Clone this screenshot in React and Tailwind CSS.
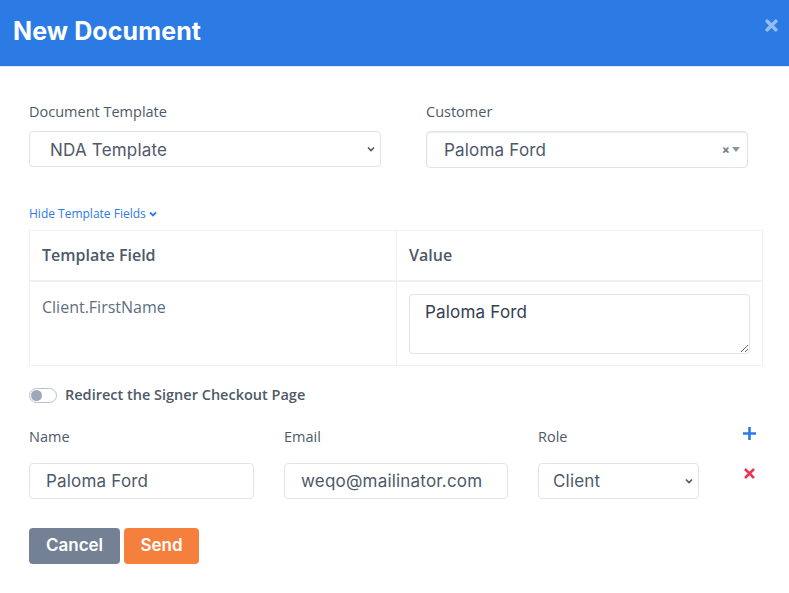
import { useState } from "react";

export default function App() {
  const [redirect, setRedirect] = useState(false);
  const [value, setValue] = useState("Paloma Ford");

  const label = "text-[14.5px] text-[#4d5969] font-medium leading-[20px]";
  const input =
    "h-9 border border-[#dfe3eb] rounded-[4px] bg-white px-4 text-[17px] tracking-[0.2px] text-[#4d5969] outline-none";

  return (
    <div className="w-[789px] h-[593px] bg-white font-['Open_Sans',sans-serif]">
      {/* Header */}
      <div className="h-[67px] bg-[#2c7be5] border-b border-[#e3e8ee] flex items-center justify-between pl-[13px] pr-[11px]">
        <h1 className="text-white text-[25px] font-bold tracking-[0.1px] font-['Inter',sans-serif] -mt-[2px]">
          New Document
        </h1>
        <svg width="13" height="13" viewBox="0 0 12 12" className="-mt-[16px]">
          <path d="M2 2 L10 10 M10 2 L2 10" stroke="#95bdf2" strokeWidth="3.2" strokeLinecap="round" />
        </svg>
      </div>

      <div className="px-[29px] pt-[35px]">
        {/* Template + Customer */}
        <div className="flex">
          <div className="w-[352px]">
            <div className={label}>Document Template</div>
            <div className={`${input} mt-[9px] flex items-center justify-between pl-[20px] pr-[4px] pt-[3px] font-['Inter',sans-serif]`}>
              <span>NDA Template</span>
              <svg width="10" height="10" viewBox="0 0 10 10" className="-mt-[3px]">
                <path d="M2 3.5 L5 6.5 L8 3.5" fill="none" stroke="#4d5969" strokeWidth="1.6" />
              </svg>
            </div>
          </div>
          <div className="ml-[45px] w-[322px]">
            <div className={label}>Customer</div>
            <div className={`${input} h-[37px] mt-[9px] flex items-center justify-between pl-[17px] pr-[7px] pt-[3px] shadow-[inset_0_1px_2px_rgba(0,0,0,0.08)] font-['Inter',sans-serif]`}>
              <span>Paloma Ford</span>
              <span className="flex items-center gap-[2px] text-[#6e7a8a] -mt-[3px]">
                <span className="text-[12px] font-bold leading-none">×</span>
                <svg width="8" height="6" viewBox="0 0 8 6">
                  <path d="M0 0 L8 0 L4 5 Z" fill="#8a94a3" />
                </svg>
              </span>
            </div>
          </div>
        </div>

        {/* Hide template fields */}
        <button className="mt-[40px] flex items-center gap-[2px] text-[12px] text-[#2c7be5] leading-none">
          Hide Template Fields
          <svg width="10" height="10" viewBox="0 0 10 10">
            <path d="M2 3.5 L5 6.5 L8 3.5" fill="none" stroke="#2c7be5" strokeWidth="1.8" />
          </svg>
        </button>

        {/* Table */}
        <table className="mt-[10px] w-[734px] border-collapse border border-[#edf0f4]">
          <thead>
            <tr className="h-[50px] border-b-2 border-[#edf0f4]">
              <th className="w-[367px] border-r border-[#edf0f4] text-left px-[12px] text-[16px] font-semibold text-[#4d5969]">
                Template Field
              </th>
              <th className="text-left px-[12px] text-[16px] font-semibold text-[#4d5969]">Value</th>
            </tr>
          </thead>
          <tbody>
            <tr className="h-[85px]">
              <td className="border-r border-[#edf0f4] align-top px-[12px] pt-[13px] text-[16px] text-[#5e6e82]">
                Client.FirstName
              </td>
              <td className="align-top px-[12px] pt-[12px]">
                <textarea
                  value={value}
                  onChange={(e) => setValue(e.target.value)}
                  className="block w-[341px] h-[60px] border border-[#dfe3eb] rounded-[4px] px-[15px] pt-[5px] text-[17px] tracking-[0.2px] text-[#344050] outline-none font-['Inter',sans-serif]"
                />
              </td>
            </tr>
          </tbody>
        </table>

        {/* Toggle */}
        <div className="mt-[19px] flex items-center gap-[8px]">
          <button
            onClick={() => setRedirect(!redirect)}
            className="w-[28px] h-[15px] rounded-full border border-[#b6c1d2] bg-white flex items-center px-[1px]"
          >
            <span className="w-[11px] h-[11px] rounded-full bg-[#9da9bb]" />
          </button>
          <span className="text-[14.5px] text-[#4d5969] font-semibold leading-[20px]">
            Redirect the Signer Checkout Page
          </span>
        </div>

        {/* Signers */}
        <div className="mt-[22px] flex">
          <div className="w-[225px]">
            <div className={label}>Name</div>
            <input defaultValue="Paloma Ford" className={`${input} mt-[16px] w-[225px] font-['Inter',sans-serif]`} />
          </div>
          <div className="ml-[30px] w-[224px]">
            <div className={label}>Email</div>
            <input defaultValue="weqo@mailinator.com" className={`${input} mt-[16px] w-[224px] font-['Inter',sans-serif]`} />
          </div>
          <div className="ml-[30px] w-[161px]">
            <div className={label}>Role</div>
            <div className={`${input} mt-[16px] flex items-center justify-between pl-[14px] pr-[4px] pt-[2px] font-['Inter',sans-serif]`}>
              <span>Client</span>
              <svg width="10" height="10" viewBox="0 0 10 10" className="-mt-[2px]">
                <path d="M2 3.5 L5 6.5 L8 3.5" fill="none" stroke="#4d5969" strokeWidth="1.6" />
              </svg>
            </div>
          </div>
          <div className="ml-[43px] flex flex-col items-center">
            <svg width="15" height="15" viewBox="0 0 15 15" className="-mt-[1px]">
              <path d="M7.5 1 V14 M1 7.5 H14" stroke="#2c7be5" strokeWidth="2.6" />
            </svg>
            <svg width="13" height="13" viewBox="0 0 13 13" className="mt-[26px]">
              <path d="M2 2 L11 11 M11 2 L2 11" stroke="#e63757" strokeWidth="2.6" />
            </svg>
          </div>
        </div>

        {/* Buttons */}
        <div className="mt-[29px] flex gap-[4px]">
          <button className="h-9 w-[91px] rounded-[4px] bg-[#748194] text-white text-[17px] font-semibold font-['Inter',sans-serif]">
            Cancel
          </button>
          <button className="h-9 w-[75px] rounded-[4px] bg-[#f5803e] text-white text-[17px] font-semibold font-['Inter',sans-serif]">
            Send
          </button>
        </div>
      </div>
    </div>
  );
}
